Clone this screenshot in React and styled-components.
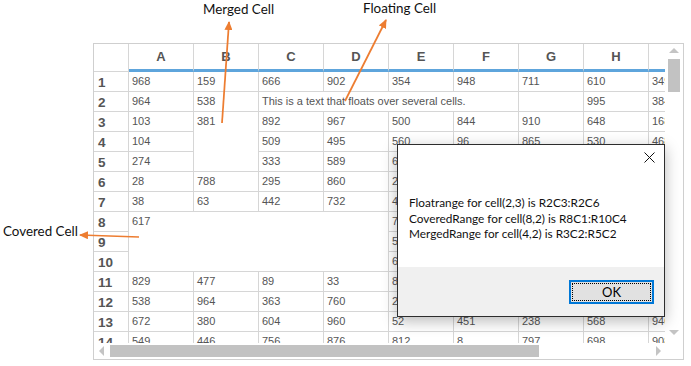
import styled, { createGlobalStyle } from "styled-components";

const GlobalStyle = createGlobalStyle`
  html, body {
    margin: 0;
    padding: 0;
    background: #fff;
  }
  body {
    font-family: "Liberation Sans", Arial, sans-serif;
  }
`;

const Page = styled.div`
  position: relative;
  width: 691px;
  height: 366px;
  box-sizing: border-box;
  padding: 43px 0 0 93px;
  overflow: hidden;
`;

const Sheet = styled.div`
  width: 591px;
  height: 317px;
  box-sizing: border-box;
  border: 1px solid #cfcfcf;
  display: grid;
  grid-template-columns: 571px 18px;
  grid-template-rows: 299px 16px;
`;

const Viewport = styled.div`
  overflow: hidden;
`;

const Cells = styled.div`
  display: grid;
  grid-template-columns: 35px repeat(9, 65px);
  grid-template-rows: 28px repeat(14, 20px);
`;

const Cell = styled.div`
  grid-column: ${(p) => p.$col} / span ${(p) => p.$cols || 1};
  grid-row: ${(p) => p.$row} / span ${(p) => p.$rows || 1};
  box-sizing: border-box;
  border-right: 1px solid #d6d6d6;
  border-bottom: 1px solid #d6d6d6;
  padding: 0 3px;
  font-size: 11px;
  line-height: 19px;
  color: #555;
  white-space: nowrap;
  overflow: hidden;
  background: #fff;
`;

const ColHead = styled(Cell)`
  border-bottom: 3px solid #5ea5dc;
  font-weight: bold;
  font-size: 13px;
  line-height: 25px;
  text-align: center;
`;

const RowHead = styled(Cell)`
  font-weight: bold;
  font-size: 13.5px;
  line-height: 21px;
  padding-left: 4px;
`;

const VScroll = styled.div`
  display: flex;
  flex-direction: column;
  align-items: center;
  padding: 4px 0 8px;
`;

const HScroll = styled.div`
  display: flex;
  align-items: center;
  padding: 0 4px 0 5px;
`;

const Arrow = styled.span`
  width: 0;
  height: 0;
  border: 5px solid transparent;
  ${(p) => p.$dir === "up" && "border-top-width: 0; border-bottom-color: #c4c4c4;"}
  ${(p) => p.$dir === "down" && "border-bottom-width: 0; border-top-color: #c4c4c4;"}
  ${(p) => p.$dir === "left" && "border-left-width: 0; border-right-color: #c4c4c4;"}
  ${(p) => p.$dir === "right" && "border-right-width: 0; border-left-color: #c4c4c4;"}
`;

const Thumb = styled.div`
  background: #c2c2c2;
  flex: none;
  ${(p) =>
    p.$vertical
      ? "width: 12px; height: 33px; margin-top: 6px;"
      : "height: 12px; width: 429px; margin-left: 6px;"}
`;

const Spacer = styled.div`
  flex: 1;
`;

const Dialog = styled.div`
  position: absolute;
  left: 397px;
  top: 144px;
  width: 268px;
  height: 173px;
  box-sizing: border-box;
  border: 1px solid #2d2d2d;
  background: #fff;
  box-shadow: 0 4px 14px rgba(0, 0, 0, 0.28);
  display: flex;
  flex-direction: column;
  font-family: Lato, "Noto Sans", sans-serif;
`;

const TitleBar = styled.div`
  height: 24px;
  display: flex;
  justify-content: flex-end;
`;

const CloseBtn = styled.div`
  width: 30px;
  display: flex;
  align-items: center;
  justify-content: center;
`;

const Message = styled.div`
  flex: 1;
  padding: 26px 8px 0 11px;
  font-size: 11.8px;
  line-height: 15.5px;
  color: #111;
`;

const Footer = styled.div`
  height: 49px;
  background: #f0f0f0;
  display: flex;
  justify-content: flex-end;
  align-items: flex-start;
  padding: 13px 10px 0 0;
  box-sizing: border-box;
`;

const OkButton = styled.div`
  width: 85px;
  height: 24px;
  box-sizing: border-box;
  border: 2px solid #0078d7;
  background: #e1e1e1;
  outline: 1px dotted #000;
  outline-offset: -4px;
  display: flex;
  align-items: center;
  justify-content: center;
  font-size: 13px;
  color: #000;
`;

const Note = styled.span`
  position: absolute;
  left: ${(p) => p.$x}px;
  top: ${(p) => p.$y}px;
  font-family: Lato, "Noto Sans", sans-serif;
  font-size: 13.4px;
  line-height: 18px;
  color: #111;
  white-space: nowrap;
`;

const Overlay = styled.svg`
  position: absolute;
  left: 0;
  top: 0;
  pointer-events: none;
`;

const letters = ["A", "B", "C", "D", "E", "F", "G", "H", "I"];

const rows = [
  ["968", "159", "666", "902", "354", "948", "711", "610", "349"],
  ["964", "538", { t: "This is a text that floats over several cells.", c: 4 }, null, null, null, "", "995", "384"],
  ["103", { t: "381", r: 3 }, "892", "967", "500", "844", "910", "648", "168"],
  ["104", null, "509", "495", "560", "96", "865", "530", "468"],
  ["274", null, "333", "589", "614", "207", "552", "731", "92"],
  ["28", "788", "295", "860", "233", "415", "678", "129", "507"],
  ["38", "63", "442", "732", "471", "820", "316", "245", "603"],
  [{ t: "617", c: 4, r: 3 }, null, null, null, "725", "188", "904", "377", "411"],
  [null, null, null, null, "536", "742", "61", "850", "279"],
  [null, null, null, null, "648", "319", "487", "206", "735"],
  ["829", "477", "89", "33", "817", "563", "142", "974", "388"],
  ["538", "964", "363", "760", "254", "690", "513", "87", "421"],
  ["672", "380", "604", "960", "52", "451", "238", "568", "940"],
  ["549", "446", "756", "876", "812", "8", "797", "698", "908"],
];

const arrows = [
  [222, 123, 229, 22],
  [345, 101, 386, 20],
  [139, 237, 80, 235],
];

function App() {
  return (
    <Page>
      <GlobalStyle />
      <Sheet>
        <Viewport>
          <Cells>
            <Cell $col={1} $row={1} />
            {letters.map((l, i) => (
              <ColHead key={l} $col={i + 2} $row={1}>
                {l}
              </ColHead>
            ))}
            {rows.map((row, r) => [
              <RowHead key={"h" + r} $col={1} $row={r + 2}>
                {r + 1}
              </RowHead>,
              ...row.map((v, c) => {
                if (v === null) return null;
                if (typeof v === "object")
                  return (
                    <Cell key={r + "-" + c} $col={c + 2} $row={r + 2} $cols={v.c} $rows={v.r}>
                      {v.t}
                    </Cell>
                  );
                return (
                  <Cell key={r + "-" + c} $col={c + 2} $row={r + 2}>
                    {v}
                  </Cell>
                );
              }),
            ])}
          </Cells>
        </Viewport>
        <VScroll>
          <Arrow $dir="up" />
          <Thumb $vertical />
          <Spacer />
          <Arrow $dir="down" />
        </VScroll>
        <HScroll>
          <Arrow $dir="left" />
          <Thumb />
          <Spacer />
          <Arrow $dir="right" />
        </HScroll>
      </Sheet>

      <Dialog>
        <TitleBar>
          <CloseBtn>
            <svg width="11" height="11" viewBox="0 0 11 11">
              <path d="M0.5 0.5 L10.5 10.5 M10.5 0.5 L0.5 10.5" stroke="#111" strokeWidth="1" />
            </svg>
          </CloseBtn>
        </TitleBar>
        <Message>
          <div>Floatrange for cell(2,3) is R2C3:R2C6</div>
          <div>CoveredRange for cell(8,2) is R8C1:R10C4</div>
          <div>MergedRange for cell(4,2) is R3C2:R5C2</div>
        </Message>
        <Footer>
          <OkButton>OK</OkButton>
        </Footer>
      </Dialog>

      <Note $x={203} $y={0}>Merged Cell</Note>
      <Note $x={363} $y={-1}>Floating Cell</Note>
      <Note $x={3} $y={222}>Covered Cell</Note>

      <Overlay width="691" height="366">
        <defs>
          <marker id="head" markerWidth="9" markerHeight="8" refX="8" refY="4" orient="auto" markerUnits="userSpaceOnUse">
            <path d="M0 0 L9 4 L0 8 z" fill="#ed7d31" />
          </marker>
        </defs>
        {arrows.map(([x1, y1, x2, y2], i) => (
          <line key={i} x1={x1} y1={y1} x2={x2} y2={y2} stroke="#ed7d31" strokeWidth="1.75" markerEnd="url(#head)" />
        ))}
      </Overlay>
    </Page>
  );
}

export default App;
